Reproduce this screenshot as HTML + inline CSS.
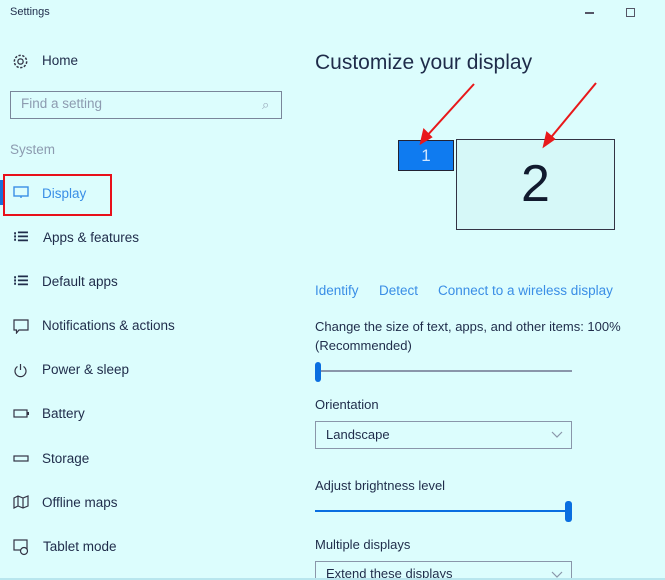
<!DOCTYPE html>
<html style="width:665px;height:580px;overflow:hidden"><head><meta charset="utf-8"><style>
*{margin:0;padding:0;box-sizing:border-box}
body{width:665px;height:580px;background:#dcfdfd;font-family:"Liberation Sans",sans-serif;color:#1f2c4a;position:relative;overflow:hidden}
.a{position:absolute;white-space:nowrap}
.t{font-size:13.5px}
.lk{color:#3a8ee6;font-size:13.5px}
</style></head><body>
<div class="a" style="left:10px;top:6px;font-size:11px">Settings</div>
<div class="a" style="left:585px;top:12px;width:9px;height:1.5px;background:#556"></div>
<div class="a" style="left:626px;top:8px;width:9px;height:9px;border:1.5px solid #556"></div>

<svg class="a" style="left:12px;top:53px" width="17" height="17" viewBox="0 0 16 16"><circle cx="8" cy="8" r="2.5" fill="none" stroke="#334" stroke-width="1.2"/><circle cx="8" cy="8" r="5.8" fill="none" stroke="#334" stroke-width="1.4" stroke-dasharray="2.2 1.4"/></svg>
<div class="a t" style="left:42px;top:53px">Home</div>
<div class="a" style="left:10px;top:91px;width:272px;height:28px;border:1.5px solid #7a869a"></div>
<div class="a" style="left:21px;top:96px;font-size:13.5px;color:#8d9bb0">Find a setting</div>
<div class="a" style="left:262px;top:97px;color:#9ab;font-size:13px">⌕</div>
<div class="a" style="left:10px;top:142px;font-size:13.5px;color:#8d9bb0">System</div>

<div class="a" style="left:0;top:180px;width:3px;height:25px;background:#1a6fd8"></div>
<div class="a" style="left:3px;top:174px;width:109px;height:42px;border:2px solid #e8101a"></div>
<svg class="a" style="left:13px;top:186px" width="16" height="13"><rect x="1" y="1" width="14" height="9" fill="none" stroke="#3a8ee6" stroke-width="1.4"/><line x1="8" y1="10" x2="8" y2="12" stroke="#3a8ee6" stroke-width="1.4"/></svg>
<div class="a t" style="left:42px;top:186px;color:#3a8ee6">Display</div>

<div class="a" style="left:13px;top:229px;font-size:13px;font-weight:bold">⁝☰</div>
<div class="a t" style="left:43px;top:230px">Apps &amp; features</div>
<div class="a" style="left:13px;top:273px;font-size:13px;font-weight:bold">⁝☰</div>
<div class="a t" style="left:42px;top:274px">Default apps</div>
<svg class="a" style="left:13px;top:319px" width="16" height="15"><path d="M1 1H15V11H6L3.5 14V11H1Z" fill="none" stroke="#334" stroke-width="1.2"/></svg>
<div class="a t" style="left:42px;top:318px">Notifications &amp; actions</div>
<svg class="a" style="left:13px;top:363px" width="15" height="15"><path d="M4.5 3.5A5.5 5.5 0 1 0 10.5 3.5" fill="none" stroke="#334" stroke-width="1.2"/><line x1="7.5" y1="1" x2="7.5" y2="7" stroke="#334" stroke-width="1.2"/></svg>
<div class="a t" style="left:42px;top:362px">Power &amp; sleep</div>
<svg class="a" style="left:13px;top:409px" width="17" height="10"><rect x="1" y="1" width="13" height="7" fill="none" stroke="#334" stroke-width="1.2"/><rect x="14" y="3" width="2" height="3" fill="#334"/></svg>
<div class="a t" style="left:42px;top:406px">Battery</div>
<svg class="a" style="left:13px;top:455px" width="17" height="8"><rect x="1" y="1" width="14" height="5" fill="none" stroke="#334" stroke-width="1.2"/></svg>
<div class="a t" style="left:42px;top:451px">Storage</div>
<svg class="a" style="left:13px;top:495px" width="17" height="16"><path d="M1 3L5 1L10 3L15 1V11L10 13L5 11L1 13Z M5 1V11 M10 3V13" fill="none" stroke="#334" stroke-width="1.2"/></svg>
<div class="a t" style="left:42px;top:495px">Offline maps</div>
<svg class="a" style="left:13px;top:539px" width="17" height="17"><rect x="1" y="1" width="13" height="10" fill="none" stroke="#334" stroke-width="1.2"/><circle cx="11" cy="12" r="3.5" fill="#dcfdfd" stroke="#334" stroke-width="1.2"/></svg>
<div class="a t" style="left:43px;top:539px">Tablet mode</div>

<div class="a" style="left:315px;top:51px;font-size:21px;color:#1f2c4a">Customize your display</div>
<div class="a" style="left:398px;top:140px;width:56px;height:31px;background:#0f7bf0;border:1.5px solid #223;color:#cfe6ff;font-size:17px;text-align:center;line-height:29px">1</div>
<div class="a" style="left:456px;top:139px;width:159px;height:91px;border:1.5px solid #334;background:#d6f8f8;font-size:52px;text-align:center;line-height:88px;color:#111a2e">2</div>
<svg class="a" style="left:0;top:0" width="665" height="580"><g stroke="#e8181a" stroke-width="2" fill="#e8181a"><line x1="474" y1="84" x2="425" y2="138"/><path d="M421 143L424 130L431 137Z"/><line x1="596" y1="83" x2="548" y2="141"/><path d="M544 146L547 133L554 139Z"/></g></svg>

<div class="a lk" style="left:315px;top:283px">Identify</div>
<div class="a lk" style="left:379px;top:283px">Detect</div>
<div class="a lk" style="left:438px;top:283px">Connect to a wireless display</div>

<div class="a t" style="left:315px;top:319px;font-size:13px">Change the size of text, apps, and other items: 100%</div>
<div class="a t" style="left:315px;top:338px;font-size:13px">(Recommended)</div>
<div class="a" style="left:316px;top:370px;width:256px;height:1.5px;background:#8a96aa"></div>
<div class="a" style="left:315px;top:362px;width:6px;height:20px;border-radius:3px;background:#0a6ee0"></div>

<div class="a t" style="left:315px;top:397px;font-size:13px">Orientation</div>
<div class="a" style="left:315px;top:421px;width:257px;height:28px;border:1.5px solid #8a96aa"></div>
<div class="a t" style="left:326px;top:427px;font-size:13px">Landscape</div>
<svg class="a" style="left:551px;top:431px" width="12" height="8"><path d="M1 1L6 6L11 1" fill="none" stroke="#8a96aa" stroke-width="1.2"/></svg>

<div class="a t" style="left:315px;top:478px;font-size:13px">Adjust brightness level</div>
<div class="a" style="left:315px;top:510px;width:254px;height:2px;background:#0a6ee0"></div>
<div class="a" style="left:565px;top:501px;width:7px;height:21px;border-radius:3px;background:#0a6ee0"></div>

<div class="a t" style="left:315px;top:537px;font-size:13px">Multiple displays</div>
<div class="a" style="left:315px;top:561px;width:257px;height:19px;border:1.5px solid #8a96aa;border-bottom:none"></div>
<div class="a t" style="left:326px;top:566px;font-size:13px">Extend these displays</div>
<svg class="a" style="left:551px;top:571px" width="12" height="8"><path d="M1 1L6 6L11 1" fill="none" stroke="#8a96aa" stroke-width="1.2"/></svg>
<div class="a" style="left:0;top:578px;width:665px;height:2px;background:#b8e6ee"></div>
</body></html>
